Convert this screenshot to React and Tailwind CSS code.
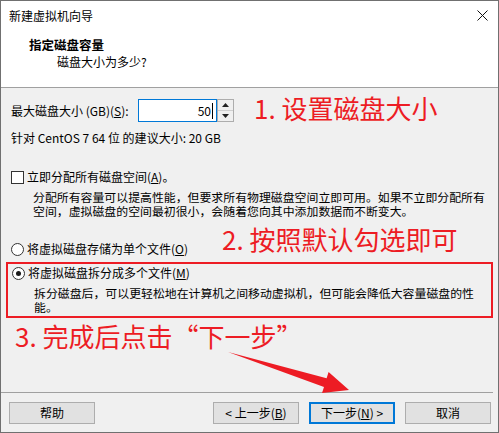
import React from "react";

const font = { fontFamily: '"Noto Sans CJK SC", "Noto Sans", sans-serif' };

function Radio({ checked }) {
  return (
    <span className="flex h-[13px] w-[13px] shrink-0 items-center justify-center rounded-full border border-[#333] bg-white">
      {checked && <span className="h-[5px] w-[5px] rounded-full bg-[#1a1a1a]" />}
    </span>
  );
}

function Btn({ children, primary }) {
  return (
    <button
      className={
        primary
          ? "h-[22px] w-[86px] border-2 border-[#0078d7] bg-[#e1e1e1] text-[12px] leading-none text-black"
          : "h-[22px] w-[86px] border border-[#adadad] bg-[#e1e1e1] text-[12px] leading-none text-black"
      }
    >
      {children}
    </button>
  );
}

export default function App() {
  return (
    <div style={font} className="relative h-[433px] w-[499px] overflow-hidden border border-[#707070] bg-[#f0f0f0] text-black">
      {/* Header */}
      <div className="h-[87px] border-b border-[#a0a0a0] bg-white">
        <div className="flex h-[29px] items-center justify-between pl-[8px] pr-[10px]">
          <span className="text-[12px] leading-4">新建虚拟机向导</span>
          <svg width="11" height="11" viewBox="0 0 11 11">
            <path d="M0.5 0.5 L10.5 10.5 M10.5 0.5 L0.5 10.5" stroke="#111" strokeWidth="1" />
          </svg>
        </div>
        <div className="pl-[28px] pt-[7px]">
          <div className="text-[12.5px] font-bold leading-4">指定磁盘容量</div>
          <div className="ml-[28px] mt-[1px] text-[12px] leading-4">磁盘大小为多少?</div>
        </div>
      </div>

      {/* Content */}
      <div className="h-[304px] pl-[10px] pt-[11px] text-[12px]">
        <div className="flex h-[23px] items-center">
          <span className="w-[127px] leading-4">
            最大磁盘大小 (GB)(<span className="underline">S</span>):
          </span>
          <div className="flex h-[23px] w-[79px] items-center justify-end border border-[#0078d7] bg-white pr-[3px]">
            <span className="leading-4">50</span>
            <span className="ml-[1px] h-[16px] w-px bg-black" />
          </div>
          <div className="flex h-[23px] w-[17px] flex-col border border-[#adadad] bg-[#f0f0f0]">
            <div className="flex flex-1 items-center justify-center border-b border-[#cfcfcf]">
              <svg width="7" height="4" viewBox="0 0 7 4"><path d="M3.5 0 L7 4 L0 4 Z" fill="#222" /></svg>
            </div>
            <div className="flex flex-1 items-center justify-center">
              <svg width="7" height="4" viewBox="0 0 7 4"><path d="M0 0 L7 0 L3.5 4 Z" fill="#222" /></svg>
            </div>
          </div>
        </div>
        <div className="mt-[8px] leading-4">针对 CentOS 7 64 位 的建议大小: 20 GB</div>

        <div className="mt-[23px] flex items-center gap-[3px] leading-4">
          <span className="h-[13px] w-[13px] border border-[#333] bg-white" />
          <span>
            立即分配所有磁盘空间(<span className="underline">A</span>)。
          </span>
        </div>
        <p className="mt-[5px] whitespace-nowrap pl-[22px] text-[11.9px] leading-[14px]">
          分配所有容量可以提高性能，但要求所有物理磁盘空间立即可用。如果不立即分配所有
          <br />
          空间，虚拟磁盘的空间最初很小，会随着您向其中添加数据而不断变大。
        </p>

        <div className="mt-[23px] flex items-center gap-[3px] leading-4">
          <Radio />
          <span>
            将虚拟磁盘存储为单个文件(<span className="underline">O</span>)
          </span>
        </div>

        <div className="-ml-[5px] mt-[5px] w-[487px] border-2 border-[#ed1c24] pb-[2px] pl-[4px] pt-[1px]">
          <div className="flex items-center gap-[3px] leading-4">
            <Radio checked />
            <span>
              将虚拟磁盘拆分成多个文件(<span className="underline">M</span>)
            </span>
          </div>
          <p className="mt-[5px] whitespace-nowrap pl-[22px] text-[11.9px] leading-[14px]">
            拆分磁盘后，可以更轻松地在计算机之间移动虚拟机，但可能会降低大容量磁盘的性
            <br />
            能。
          </p>
        </div>
      </div>

      {/* Footer */}
      <div className="mr-[5px] border-t border-[#a0a0a0]" />
      <div className="flex items-center justify-between pl-[8px] pr-[7px] pt-[9px]">
        <Btn>帮助</Btn>
        <div className="flex gap-[10px]">
          <Btn>
            &lt; 上一步(<span className="underline">B</span>)
          </Btn>
          <Btn primary>
            下一步(<span className="underline">N</span>) &gt;
          </Btn>
          <Btn>取消</Btn>
        </div>
      </div>

      {/* Annotations */}
      <div className="absolute left-[253px] top-[94px] whitespace-nowrap text-[26px] leading-[26px] text-[#ed1c24]">
        1. 设置磁盘大小
      </div>
      <div className="absolute left-[221px] top-[225px] whitespace-nowrap text-[26px] leading-[26px] text-[#ed1c24]">
        2. 按照默认勾选即可
      </div>
      <div className="absolute left-[14px] top-[322px] whitespace-nowrap text-[26px] leading-[26px] text-[#ed1c24]">
        3. 完成后点击“下一步”
      </div>
      <svg className="pointer-events-none absolute left-[-1px] top-[-1px]" width="499" height="433" viewBox="0 0 499 433">
        <polygon
          points="228,352 326.6,378.3 328.6,372.1 349,390 322,393.1 324,386.9"
          fill="#ed1c24"
        />
      </svg>
    </div>
  );
}
